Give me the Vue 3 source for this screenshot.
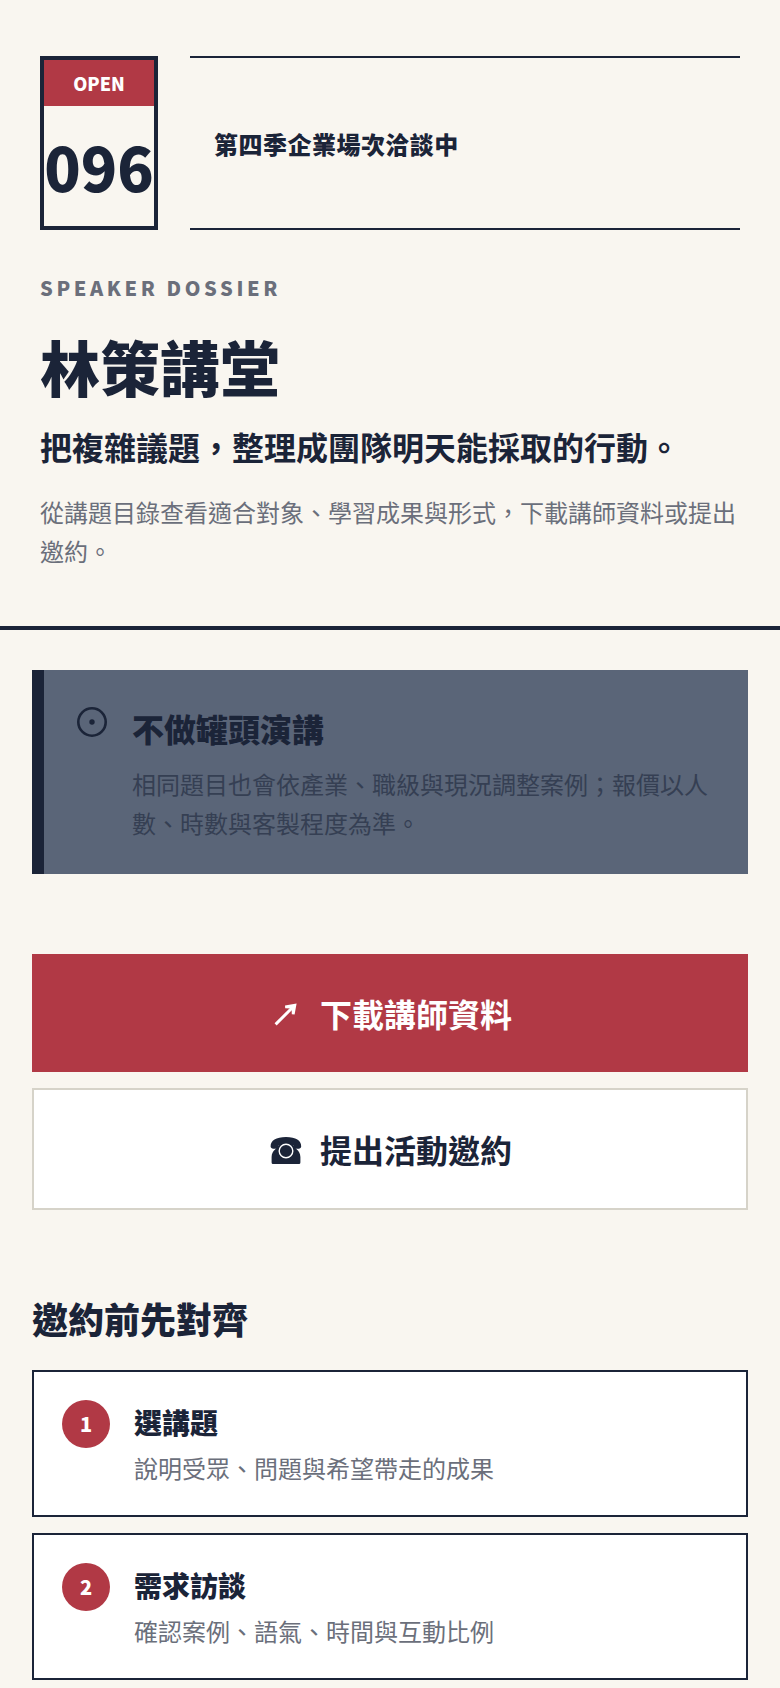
<script setup>
const actions = [
  { label: '下載講師資料', icon: 'arrow', primary: true },
  { label: '提出活動邀約', icon: 'phone', primary: false }
]

const steps = [
  { title: '選講題', text: '說明受眾、問題與希望帶走的成果' },
  { title: '需求訪談', text: '確認案例、語氣、時間與互動比例' }
]
</script>

<template>
  <div class="page" lang="zh-Hant">
    <header class="hero">
      <div class="hero__status">
        <div class="stamp">
          <span class="stamp__label">OPEN</span>
          <strong class="stamp__number">096</strong>
        </div>
        <p class="hero__season">第四季企業場次洽談中</p>
      </div>
      <p class="hero__eyebrow">SPEAKER DOSSIER</p>
      <h1 class="hero__title">林策講堂</h1>
      <p class="hero__lead">把複雜議題，整理成團隊明天能採取的行動。</p>
      <p class="hero__text">從講題目錄查看適合對象、學習成果與形式，下載講師資料或提出邀約。</p>
    </header>

    <main class="content">
      <section class="notice">
        <svg class="notice__icon" viewBox="0 0 32 32" aria-hidden="true">
          <circle cx="16" cy="16" r="13.7" fill="none" stroke="currentColor" stroke-width="2.6" />
          <circle cx="16" cy="16" r="2.7" fill="currentColor" />
        </svg>
        <div>
          <h2 class="notice__title">不做罐頭演講</h2>
          <p class="notice__text">相同題目也會依產業、職級與現況調整案例；報價以人數、時數與客製程度為準。</p>
        </div>
      </section>

      <div class="actions">
        <button
            v-for="action in actions"
            :key="action.label"
            type="button"
            class="action"
            :class="{ 'action--primary': action.primary }"
        >
          <svg v-if="action.icon === 'arrow'" class="action__icon" viewBox="0 0 36 36" aria-hidden="true">
            <path d="M7.600 29.400 26 11" fill="none" stroke="currentColor" stroke-width="3" />
            <path d="M17 10.500 28.600 8.400 26.600 19.400 23.800 19.200 23.600 13.600 17.200 13.200Z" fill="currentColor" />
          </svg>
          <svg v-else class="action__icon" viewBox="0 0 36 36" aria-hidden="true">
            <path d="M2.600 15.500C2.600 9.500 8 6 18 6S33.200 9.500 33.200 15.500C33.200 17.500 31 18 28.500 17.800C26.200 17.600 25.400 16.500 25.400 14.200H10.600C10.600 16.500 9.600 17.600 7.400 17.800C5 18 2.600 17.500 2.600 15.500Z" fill="currentColor" />
            <path d="M11 13H25C25.500 17 32.400 19 32.400 26V31.500Q32.400 33 31 33H5Q3.600 33 3.600 31.500V26C3.600 19 10.500 17 11 13Z" fill="currentColor" />
            <circle cx="18" cy="20" r="6.800" fill="none" stroke="white" stroke-width="1.400" />
          </svg>
          <span>{{ action.label }}</span>
        </button>
      </div>

      <section class="steps">
        <h2 class="steps__title">邀約前先對齊</h2>
        <ol class="steps__list">
          <li v-for="(step, index) in steps" :key="step.title" class="step">
            <span class="step__number">{{ index + 1 }}</span>
            <div>
              <h3 class="step__title">{{ step.title }}</h3>
              <p class="step__text">{{ step.text }}</p>
            </div>
          </li>
        </ol>
      </section>
    </main>
  </div>
</template>

<style>
body {
    margin: 0;
    background: #f9f6f0;
}
</style>

<style scoped>
.page {
    --ink: #1b2438;
    --red: #b13945;
    --muted: #6b6f7b;

    color: var(--ink);
    font-family: "Noto Sans CJK TC", sans-serif;
    font-size: 24px;
    line-height: 39px;
}

h1, h2, h3, p, ol {
    margin: 0;
    padding: 0;
}

.hero {
    padding: 56px 40px;
    border-bottom: 4px solid var(--ink);
}

.hero__status {
    display: flex;
    gap: 32px;
    margin-bottom: 40px;
}

.stamp {
    display: flex;
    flex-direction: column;
    flex: none;
    width: 110px;
    border: 4px solid var(--ink);
    text-align: center;
}

.stamp__label {
    padding-block: 8px;
    background: var(--red);
    color: white;
    font-size: 18px;
    font-weight: 900;
    line-height: 30px;
}

.stamp__number {
    font-size: 60px;
    font-weight: 900;
    line-height: 120px;
}

.hero__season {
    display: flex;
    align-items: center;
    flex: 1;
    padding-inline: 24px;
    border-block: 2px solid var(--ink);
    font-weight: 900;
    letter-spacing: 0.02em;
}

.hero__eyebrow {
    color: var(--muted);
    font-size: 20px;
    font-weight: 900;
    line-height: 35px;
    letter-spacing: 0.18em;
}

.hero__title {
    margin-top: 24px;
    font-size: 60px;
    font-weight: 900;
    line-height: 74px;
}

.hero__lead {
    margin-top: 18px;
    font-size: 32px;
    font-weight: 700;
    line-height: 51px;
}

.hero__text {
    margin-top: 20px;
    color: var(--muted);
}

.content {
    padding: 40px 32px 8px;
}

.notice {
    display: flex;
    align-items: flex-start;
    gap: 24px;
    padding: 32px;
    border-left: 12px solid var(--ink);
    background: #5a6578;
}

.notice__icon {
    flex: none;
    width: 32px;
    height: 40px;
}

.notice__title {
    margin-bottom: 10px;
    font-size: 32px;
    font-weight: 900;
    line-height: 52px;
}

.notice__text {
    color: #353f53;
}

.actions {
    display: flex;
    flex-direction: column;
    gap: 16px;
    margin-top: 80px;
}

.action {
    display: flex;
    align-items: center;
    justify-content: center;
    gap: 16px;
    padding: 32px;
    border: 2px solid #d6d3c9;
    background: white;
    color: var(--ink);
    font-family: inherit;
    font-size: 32px;
    font-weight: 700;
    line-height: 54px;
    cursor: pointer;
}

.action--primary {
    border: none;
    background: var(--red);
    color: white;
}

.action__icon {
    width: 36px;
    height: 36px;
}

.steps {
    margin-top: 80px;
}

.steps__title {
    margin-bottom: 24px;
    font-size: 36px;
    font-weight: 900;
    line-height: 56px;
}

.steps__list {
    display: flex;
    flex-direction: column;
    gap: 16px;
    list-style: none;
}

.step {
    display: flex;
    align-items: flex-start;
    gap: 24px;
    padding: 28px;
    border: 2px solid var(--ink);
    background: white;
}

.step__number {
    flex: none;
    width: 48px;
    border-radius: 50%;
    background: var(--red);
    color: white;
    font-size: 20px;
    font-weight: 900;
    line-height: 48px;
    text-align: center;
}

.step__title {
    margin-bottom: 4px;
    font-size: 28px;
    font-weight: 900;
    line-height: 44px;
}

.step__text {
    color: var(--muted);
}
</style>
